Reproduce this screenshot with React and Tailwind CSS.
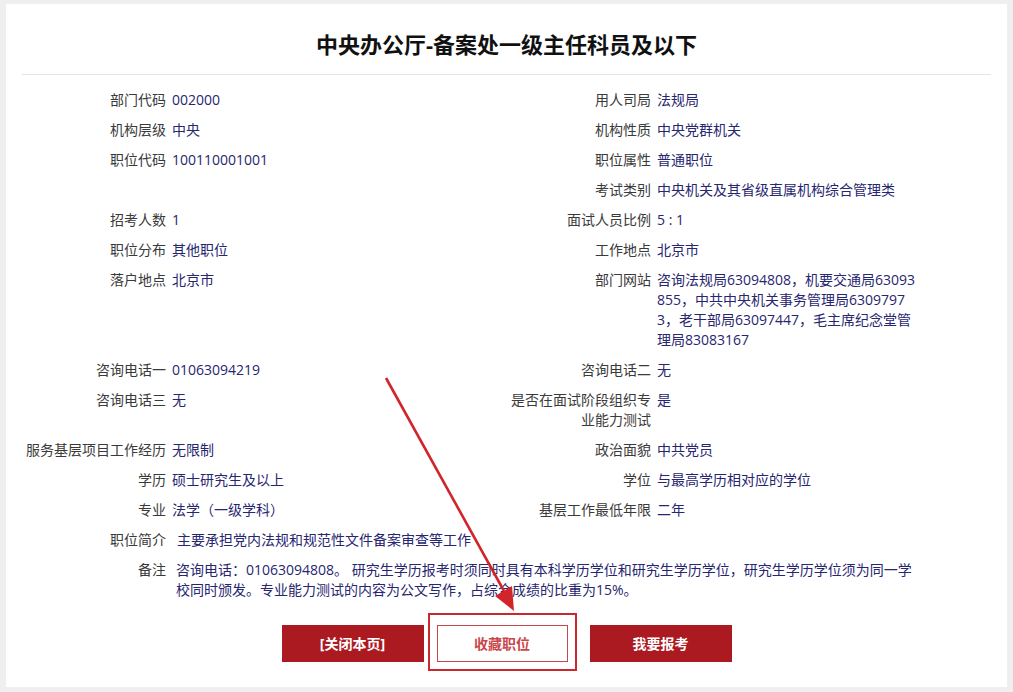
import React from "react";

const rows = [
  { l: ["部门代码", "002000"], r: ["用人司局", "法规局"] },
  { l: ["机构层级", "中央"], r: ["机构性质", "中央党群机关"] },
  { l: ["职位代码", "100110001001"], r: ["职位属性", "普通职位"] },
  { l: null, r: ["考试类别", "中央机关及其省级直属机构综合管理类"] },
  { l: ["招考人数", "1"], r: ["面试人员比例", "5 : 1"] },
  { l: ["职位分布", "其他职位"], r: ["工作地点", "北京市"] },
  {
    l: ["落户地点", "北京市"],
    r: [
      "部门网站",
      [
        "咨询法规局63094808，机要交通局63093",
        "855，中共中央机关事务管理局6309797",
        "3，老干部局63097447，毛主席纪念堂管",
        "理局83083167",
      ],
    ],
  },
  { l: ["咨询电话一", "01063094219"], r: ["咨询电话二", "无"] },
  { l: ["咨询电话三", "无"], r: [["是否在面试阶段组织专", "业能力测试"], "是"] },
  { l: ["服务基层项目工作经历", "无限制"], r: ["政治面貌", "中共党员"] },
  { l: ["学历", "硕士研究生及以上"], r: ["学位", "与最高学历相对应的学位"] },
  { l: ["专业", "法学（一级学科）"], r: ["基层工作最低年限", "二年"] },
];

const Lines = ({ text }) =>
  Array.isArray(text)
    ? text.map((t, i) => (
        <span key={i} className="block whitespace-nowrap">
          {t}
        </span>
      ))
    : text;

const Label = ({ text }) => (
  <div className="text-right text-[#3a3a3a]">
    <Lines text={text} />
  </div>
);

const Value = ({ text, className = "" }) => (
  <div className={"pl-[6px] text-[#27266f] " + className}>
    <Lines text={text} />
  </div>
);

export default function App() {
  return (
    <div
      className="relative w-full min-h-[692px] bg-[#efefef] pt-[4px] px-[6px] overflow-hidden"
      style={{ fontFamily: '"Open Sans", "Noto Sans CJK SC", sans-serif' }}
    >
      <div className="bg-white h-[683px] px-[16px]">
        <h1 className="pt-[25px] text-[22px] leading-[30px] font-bold text-center text-[#111]">
          中央办公厅-备案处一级主任科员及以下
        </h1>
        <div className="h-px bg-[#e5e5e5] mt-[15px]" />

        <div className="grid grid-cols-[140px_345px_140px_269px] gap-y-[10px] mt-[15px] ml-[4px] text-[14px] leading-[20px]">
          {rows.map((row, i) => (
            <React.Fragment key={i}>
              {row.l ? <Label text={row.l[0]} /> : <div />}
              {row.l ? <Value text={row.l[1]} /> : <div />}
              <Label text={row.r[0]} />
              <Value text={row.r[1]} />
            </React.Fragment>
          ))}
          <Label text="职位简介" />
          <Value className="col-span-3 pl-[11px]" text="主要承担党内法规和规范性文件备案审查等工作" />
          <Label text="备注" />
          <Value
            className="col-span-3 pl-[10px]"
            text={[
              "咨询电话：01063094808。 研究生学历报考时须同时具有本科学历学位和研究生学历学位，研究生学历学位须为同一学",
              "校同时颁发。专业能力测试的内容为公文写作，占综合成绩的比重为15%。",
            ]}
          />
        </div>

        <div className="flex justify-center mt-[25px] text-[14px] font-bold">
          <button className="w-[142px] h-[37px] bg-[#ab1a20] text-white">[关闭本页]</button>
          <button className="w-[131px] h-[37px] ml-[13px] bg-white border border-[#c5484c] text-[#c9474b]">
            收藏职位
          </button>
          <button className="w-[142px] h-[37px] ml-[22px] bg-[#ab1a20] text-white">我要报考</button>
        </div>
      </div>

      {/* annotation drawn over the screenshot */}
      <div className="absolute left-[428px] top-[613px] w-[149px] h-[58px] border-2 border-[#c8282e] pointer-events-none" />
      <svg
        className="absolute left-0 top-0 pointer-events-none"
        width="1013"
        height="692"
        viewBox="0 0 1013 692"
      >
        <line x1="386" y1="378" x2="504" y2="591" stroke="#d1252c" strokeWidth="2.6" />
        <polygon points="514,611 495,596 512,586" fill="#d1252c" />
      </svg>
    </div>
  );
}
